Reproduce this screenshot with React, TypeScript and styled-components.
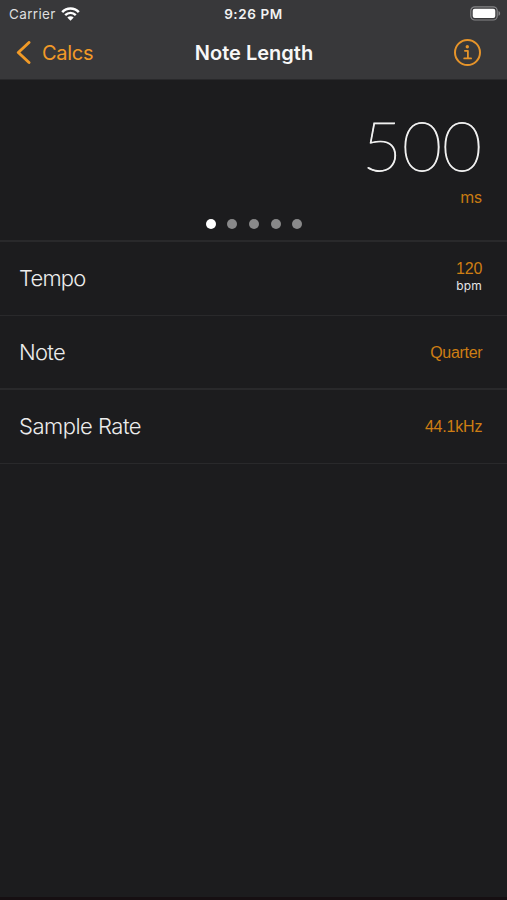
import React from "react";
import styled, { createGlobalStyle } from "styled-components";

const GlobalStyle = createGlobalStyle`
  * { box-sizing: border-box; }
  body { margin: 0; background: #1c1c1e; }
`;

const Screen = styled.div`
  display: flex;
  flex-direction: column;
  width: 507px;
  height: 900px;
  overflow: hidden;
  background: #1c1c1e;
  border-bottom: 3px solid #160f12;
  color: #fff;
  font-family: Inter, "Liberation Sans", sans-serif;
  white-space: nowrap;
`;

const Header = styled.header`
  height: 80px;
  flex: none;
  background: #38383a;
  border-bottom: 1px solid #29292b;
`;

const StatusBar = styled.div`
  display: grid;
  grid-template-columns: 1fr auto 1fr;
  align-items: center;
  height: 27px;
  padding: 0 6px;
  font-size: 13.5px;
`;

const Carrier = styled.div`
  display: flex;
  align-items: center;
  gap: 5px;
  margin-left: 3px;
  color: #dededf;
  letter-spacing: 0.35px;
`;

const Clock = styled.div`
  font-weight: 600;
  font-size: 13.5px;
  letter-spacing: 0.6px;
  color: #f2f2f2;
`;

const BatterySlot = styled.div`
  display: flex;
  justify-content: flex-end;
`;

const NavBar = styled.nav`
  display: grid;
  grid-template-columns: 1fr auto 1fr;
  align-items: center;
  height: 51px;
  padding: 0 16px;
`;

const BackButton = styled.button`
  display: flex;
  align-items: center;
  gap: 10px;
  padding: 0;
  border: 0;
  background: none;
  color: #f19a27;
  font: 400 20px Inter, sans-serif;
  letter-spacing: -0.3px;
`;

const Title = styled.h1`
  margin: 0;
  padding-left: 1px;
  font-size: 20px;
  font-weight: 600;
  letter-spacing: 0;
  color: #f7f7f7;
`;

const InfoButton = styled.button`
  justify-self: end;
  display: flex;
  margin-right: 9px;
  padding: 0;
  border: 0;
  background: none;
`;

const Result = styled.section`
  display: flex;
  flex-direction: column;
  align-items: flex-end;
  height: 162px;
  padding: 35px 25px 0;
  border-bottom: 2px solid #29292b;
`;

const ResultValue = styled.div`
  height: 60px;
  line-height: 60px;
  font-family: Lato, Inter, sans-serif;
  font-size: 69px;
  font-weight: 200;
  color: #f0f0f0;
  -webkit-text-stroke: 0.9px #f0f0f0;
`;

const ResultUnit = styled.div`
  margin-top: 12px;
  line-height: 20px;
  font-size: 16px;
  letter-spacing: -0.3px;
  color: #c87b12;
`;

const Pager = styled.div`
  display: flex;
  align-self: center;
  gap: 11.6px;
  margin-top: 12px;
  padding-left: 1px;
`;

const Dot = styled.span<{ $active?: boolean }>`
  width: 10px;
  height: 10px;
  border-radius: 50%;
  background: ${({ $active }) => ($active ? "#fff" : "#89898a")};
`;

const Row = styled.div<{ $height: number; $line: number }>`
  display: flex;
  align-items: center;
  justify-content: space-between;
  height: ${({ $height }) => $height}px;
  padding: 0 25px 0 19px;
  border-bottom: ${({ $line }) => $line}px solid #29292b;
`;

const Label = styled.div<{ $spacing: number }>`
  font-size: 22px;
  font-weight: 300;
  line-height: 30px;
  padding-bottom: 1px;
  letter-spacing: ${({ $spacing }) => $spacing}px;
  color: #ececec;
`;

const ValueStack = styled.div`
  display: flex;
  flex-direction: column;
  align-items: flex-end;
  padding-bottom: 5px;
`;

const Value = styled.div<{ $spacing: number }>`
  font-family: "Liberation Sans", Arial, sans-serif;
  font-size: 16px;
  line-height: 19px;
  letter-spacing: ${({ $spacing }) => $spacing}px;
  margin-right: ${({ $spacing }) => $spacing}px;
  color: #ce7e13;
`;

const ValueUnit = styled.div`
  font-size: 12px;
  line-height: 15px;
  letter-spacing: 0.2px;
  color: #e5e5e7;
`;

const WifiIcon = () => (
  <svg width="19" height="14" viewBox="0 0 19 14" fill="none" stroke="#fff">
    <path d="M1.2 5.1C5.8.3 13.2.3 17.8 5.1" strokeWidth="2.6" />
    <path d="M4.2 8.1c3-3 7.6-3 10.6 0" strokeWidth="2.4" />
    <path d="M9.5 13.7 6.3 10.5c1.8-1.7 4.6-1.7 6.4 0Z" fill="#fff" stroke="none" />
  </svg>
);

const BatteryIcon = () => (
  <svg width="31" height="15" viewBox="0 0 31 15" fill="none">
    <rect x=".8" y=".8" width="26.4" height="13.2" rx="4" stroke="#858587" strokeWidth="1.2" />
    <rect x="2.7" y="2.7" width="22.6" height="9.4" rx="2" fill="#fff" />
    <path d="M28.5 5c2.2.8 2.2 4 0 4.8Z" fill="#858587" />
  </svg>
);

const ChevronIcon = () => (
  <svg width="16" height="24" viewBox="0 0 16 24" fill="none">
    <path d="M13 1.5 2.3 11.5 13 21.5" stroke="#f19a27" strokeWidth="2.9" strokeLinecap="round" strokeLinejoin="round" />
  </svg>
);

const InfoIcon = () => (
  <svg width="28" height="28" viewBox="0 0 28 28" fill="none" stroke="#e6942a">
    <circle cx="13.5" cy="13.5" r="12.5" strokeWidth="2" />
    <circle cx="13.3" cy="7.8" r="1.7" fill="#e6942a" stroke="none" />
    <path d="M10.9 11.8h3v7.3M10.2 19.4h6.9" strokeWidth="1.8" strokeLinecap="round" strokeLinejoin="round" />
  </svg>
);

export default function App() {
  return (
    <>
      <GlobalStyle />
      <Screen>
        <Header>
          <StatusBar>
            <Carrier>Carrier<WifiIcon /></Carrier>
            <Clock>9:26 PM</Clock>
            <BatterySlot><BatteryIcon /></BatterySlot>
          </StatusBar>
          <NavBar>
            <BackButton><ChevronIcon />Calcs</BackButton>
            <Title>Note Length</Title>
            <InfoButton aria-label="Info"><InfoIcon /></InfoButton>
          </NavBar>
        </Header>
        <Result>
          <ResultValue>500</ResultValue>
          <ResultUnit>ms</ResultUnit>
          <Pager>
            <Dot $active />
            <Dot />
            <Dot />
            <Dot />
            <Dot />
          </Pager>
        </Result>
        <Row $height={74} $line={1}>
          <Label $spacing={-0.8}>Tempo</Label>
          <ValueStack>
            <Value $spacing={-0.2}>120</Value>
            <ValueUnit>bpm</ValueUnit>
          </ValueStack>
        </Row>
        <Row $height={74} $line={2}>
          <Label $spacing={-0.7}>Note</Label>
          <Value $spacing={-0.3}>Quarter</Value>
        </Row>
        <Row $height={74} $line={1}>
          <Label $spacing={-0.5}>Sample Rate</Label>
          <Value $spacing={-0.2}>44.1kHz</Value>
        </Row>
      </Screen>
    </>
  );
}
